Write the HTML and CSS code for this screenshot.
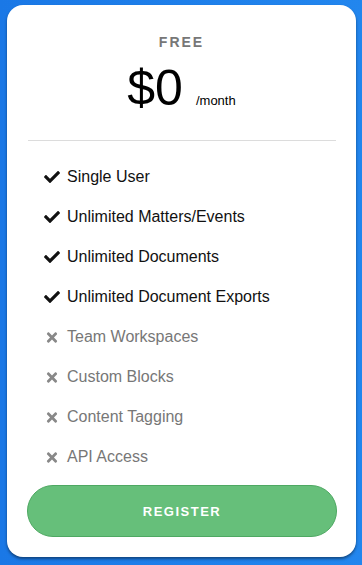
FILE: index.html
```html
<!DOCTYPE html>
<html lang="en">
  <head>
    <meta charset="UTF-8" />
    <meta name="viewport" content="width=device-width, initial-scale=1.0" />
    <title>Pricing</title>
    <link rel="stylesheet" href="styles.css">
  </head>
  <body>
    <div class="card">
      <h3 class="plan">FREE</h3>
      <div class="price">
        <span class="amount">$0</span>
        <span class="period">/month</span>
      </div>
      <hr class="divider" />
      <ul class="features">
        <li><svg class="icon check" viewBox="0 0 512 512"><path d="M173.9 439.4l-166.4-166.4c-10-10-10-26.2 0-36.2l36.2-36.2c10-10 26.2-10 36.2 0L192 312.7 432.1 72.6c10-10 26.2-10 36.2 0l36.2 36.2c10 10 10 26.2 0 36.2l-294.4 294.4c-10 10-26.2 10-36.2 0z"/></svg>Single User</li>
        <li><svg class="icon check" viewBox="0 0 512 512"><path d="M173.9 439.4l-166.4-166.4c-10-10-10-26.2 0-36.2l36.2-36.2c10-10 26.2-10 36.2 0L192 312.7 432.1 72.6c10-10 26.2-10 36.2 0l36.2 36.2c10 10 10 26.2 0 36.2l-294.4 294.4c-10 10-26.2 10-36.2 0z"/></svg>Unlimited Matters/Events</li>
        <li><svg class="icon check" viewBox="0 0 512 512"><path d="M173.9 439.4l-166.4-166.4c-10-10-10-26.2 0-36.2l36.2-36.2c10-10 26.2-10 36.2 0L192 312.7 432.1 72.6c10-10 26.2-10 36.2 0l36.2 36.2c10 10 10 26.2 0 36.2l-294.4 294.4c-10 10-26.2 10-36.2 0z"/></svg>Unlimited Documents</li>
        <li><svg class="icon check" viewBox="0 0 512 512"><path d="M173.9 439.4l-166.4-166.4c-10-10-10-26.2 0-36.2l36.2-36.2c10-10 26.2-10 36.2 0L192 312.7 432.1 72.6c10-10 26.2-10 36.2 0l36.2 36.2c10 10 10 26.2 0 36.2l-294.4 294.4c-10 10-26.2 10-36.2 0z"/></svg>Unlimited Document Exports</li>
        <li class="off"><svg class="icon times" viewBox="0 0 352 512"><path d="M242.7 256l100.1-100.1c12.3-12.3 12.3-32.2 0-44.5l-22.2-22.2c-12.3-12.3-32.2-12.3-44.5 0L176 189.3 75.9 89.2c-12.3-12.3-32.2-12.3-44.5 0L9.2 111.5c-12.3 12.3-12.3 32.2 0 44.5L109.3 256 9.2 356.1c-12.3 12.3-12.3 32.2 0 44.5l22.2 22.2c12.3 12.3 32.2 12.3 44.5 0L176 322.7l100.1 100.1c12.3 12.3 32.2 12.3 44.5 0l22.2-22.2c12.3-12.3 12.3-32.2 0-44.5z"/></svg>Team Workspaces</li>
        <li class="off"><svg class="icon times" viewBox="0 0 352 512"><path d="M242.7 256l100.1-100.1c12.3-12.3 12.3-32.2 0-44.5l-22.2-22.2c-12.3-12.3-32.2-12.3-44.5 0L176 189.3 75.9 89.2c-12.3-12.3-32.2-12.3-44.5 0L9.2 111.5c-12.3 12.3-12.3 32.2 0 44.5L109.3 256 9.2 356.1c-12.3 12.3-12.3 32.2 0 44.5l22.2 22.2c12.3 12.3 32.2 12.3 44.5 0L176 322.7l100.1 100.1c12.3 12.3 32.2 12.3 44.5 0l22.2-22.2c12.3-12.3 12.3-32.2 0-44.5z"/></svg>Custom Blocks</li>
        <li class="off"><svg class="icon times" viewBox="0 0 352 512"><path d="M242.7 256l100.1-100.1c12.3-12.3 12.3-32.2 0-44.5l-22.2-22.2c-12.3-12.3-32.2-12.3-44.5 0L176 189.3 75.9 89.2c-12.3-12.3-32.2-12.3-44.5 0L9.2 111.5c-12.3 12.3-12.3 32.2 0 44.5L109.3 256 9.2 356.1c-12.3 12.3-12.3 32.2 0 44.5l22.2 22.2c12.3 12.3 32.2 12.3 44.5 0L176 322.7l100.1 100.1c12.3 12.3 32.2 12.3 44.5 0l22.2-22.2c12.3-12.3 12.3-32.2 0-44.5z"/></svg>Content Tagging</li>
        <li class="off"><svg class="icon times" viewBox="0 0 352 512"><path d="M242.7 256l100.1-100.1c12.3-12.3 12.3-32.2 0-44.5l-22.2-22.2c-12.3-12.3-32.2-12.3-44.5 0L176 189.3 75.9 89.2c-12.3-12.3-32.2-12.3-44.5 0L9.2 111.5c-12.3 12.3-12.3 32.2 0 44.5L109.3 256 9.2 356.1c-12.3 12.3-12.3 32.2 0 44.5l22.2 22.2c12.3 12.3 32.2 12.3 44.5 0L176 322.7l100.1 100.1c12.3 12.3 32.2 12.3 44.5 0l22.2-22.2c12.3-12.3 12.3-32.2 0-44.5z"/></svg>API Access</li>
      </ul>
      <button class="register">REGISTER</button>
    </div>
  </body>
</html>
```

FILE: styles.css
```css
body {
  margin: 0;
  padding: 5px 6px 8px 7px;
  font-family: "Liberation Sans", Arial, sans-serif;
  background: linear-gradient(90deg, #1a78e6, #2286ee);
  min-height: 565px;
  box-sizing: border-box;
}
.card {
  display: flex;
  flex-direction: column;
  width: 349px;
  height: 552px;
  box-sizing: border-box;
  padding: 29px 20px 20px 20px;
  background: #fff;
  border-radius: 16px;
  box-shadow: 0 2px 3px rgba(0, 0, 0, 0.45);
}
.plan {
  margin: 0;
  text-align: center;
  font-size: 14px;
  line-height: 16px;
  font-weight: bold;
  letter-spacing: 2px;
  color: #777;
}
.price {
  display: flex;
  justify-content: center;
  align-items: baseline;
  margin-top: 13px;
  line-height: 1;
  color: #000;
}
.amount {
  font-size: 50px;
}
.period {
  font-size: 13px;
  margin-left: 13px;
}
.divider {
  margin: 27px 0 0 1px;
  border: 0;
  border-top: 1px solid #dcdcdc;
}
.features {
  list-style: none;
  margin: 16px 0 0 0;
  padding: 0 0 0 17px;
}
.features li {
  display: flex;
  align-items: center;
  gap: 7px;
  height: 40px;
  font-size: 16px;
  color: #111;
}
.features li.off {
  color: #777;
}
.icon {
  width: 16px;
  height: 16px;
}
.check {
  fill: #111;
}
.times {
  fill: #888;
  width: 12px;
  height: 15px;
  padding: 0 2px;
}
.register {
  margin-top: 8px;
  width: 310px;
  height: 52px;
  border: 1px solid #4ea862;
  border-radius: 26px;
  background: #66bf7a;
  color: #fff;
  font-family: inherit;
  font-size: 13px;
  font-weight: bold;
  letter-spacing: 1.5px;
  cursor: pointer;
}
```
